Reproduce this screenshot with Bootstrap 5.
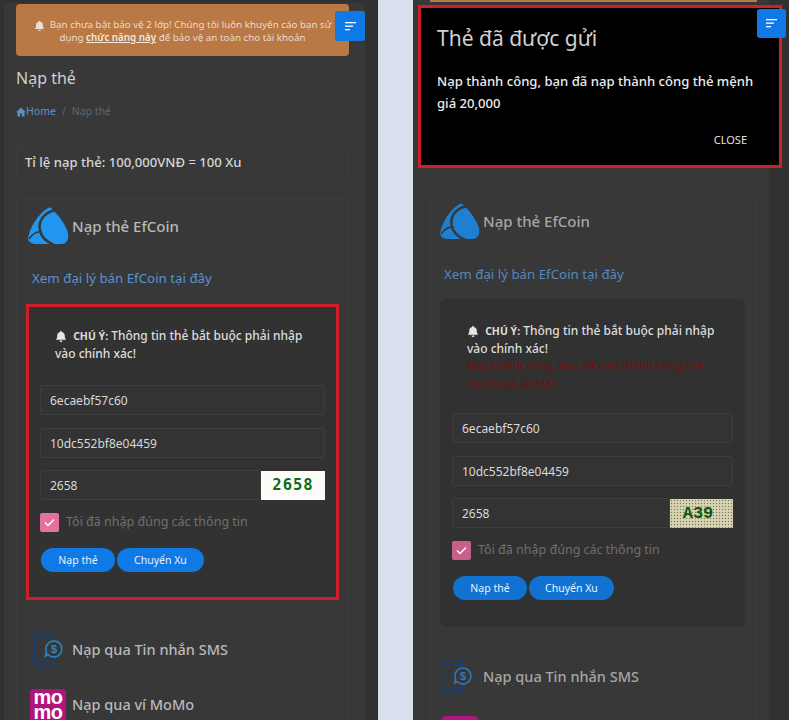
<!DOCTYPE html>
<html lang="vi">
<head>
  <meta charset="UTF-8" />
  <title>Nạp thẻ</title>
  <link href="https://cdn.jsdelivr.net/npm/bootstrap@5.3.3/dist/css/bootstrap.min.css" rel="stylesheet">
  <style>
    html, body { margin: 0; background: #d9dfec; }
    body { font-family: "Noto Sans", "Open Sans", sans-serif; }
    .shots { width: 789px; height: 720px; overflow: hidden; }
    .shot { position: relative; height: 720px; overflow: hidden; background: #313131; flex: none; }
    .shot-left { width: 378px; padding: 3px 0 0 4px; --btn: #0f7ae5; --tick: #e4719e; }
    .shot-right { width: 376px; margin-left: 35px; --btn: #1272d2; --tick: #c8608a; }
    .page-wrap { background: #383838; height: 100%; }
    .shot-left .page-wrap { width: 361px; padding: 1px 16px 0 12px; border-radius: 5px 5px 0 0; }
    .shot-right .page-wrap { width: 356px; padding: 0 12px 0 17px; }

    .warn-box { background: #b97844; color: #eadccf; height: 52px; border-radius: 4px; font-size: 9.8px; line-height: 13px; text-align: center; padding: 14px 8px 0; }
    .warn-box a { color: #f2e7dc; font-weight: 600; }
    .warn-sliver { background: #b97844; height: 2px; margin-bottom: 192px; }
    .page-title { font-size: 16px; line-height: 20px; color: #cfcfcf; margin: 12px 0 0; font-weight: 400; }
    .crumbs { --bs-breadcrumb-item-padding-x: 6px; font-size: 10.5px; line-height: 14px; margin: 16px 0 0; }
    .crumbs a { color: #5d92c9; text-decoration: none; }
    .crumbs .breadcrumb-item.active { color: #5d6873; }
    .crumbs .breadcrumb-item + .breadcrumb-item::before { color: #5d6873; }
    .rate-card { height: 35px; margin-top: 28px; background: transparent; border: 1px solid #3d3d3d; border-radius: 3px; color: #d6d6d6; font-size: 13.1px; line-height: 31px; padding-left: 8px; font-weight: 500; }

    .coin-card { background: transparent; border: 1px solid #3d3d3d; border-bottom: 0; border-radius: 3px 3px 0 0; margin-top: 18px; height: 700px; padding: 7px 9px 0; }
    .shot-left .coin-card { padding-left: 11px; }
    .pay-row { display: flex; align-items: center; height: 38px; color: #b9b9b9; font-size: 14.5px; font-weight: 500; }
    .pay-slot { flex: none; width: 44px; }
    .shot-right .pay-slot { width: 43px; }
    .shot-right .pay-row { color: #a6a6a6; }
    .coin-title { font-size: 15px; }
    .agent-link { display: block; color: #5b93cf; font-size: 13.3px; line-height: 16px; margin: 25px 0 18px 4px; text-decoration: none; }
    .shot-right .agent-link { margin: 26px 0 17px 4px; color: #5488be; }

    .form-frame { background: #323232; padding: 20px 11px 25px; border: 3px solid #cf1f29; width: 313px; margin-left: -2px; }
    .form-frame.is-plain { border: 0; border-radius: 6px; width: 305px; margin-left: 0; padding: 23px 12px 27px; background: #313131; }
    .note-text { font-size: 12px; line-height: 17px; color: #dedede; padding-left: 15px; margin-bottom: 23px; font-weight: 500; }
    .is-plain .note-text { margin-bottom: 22px; }
    .note-text .note-red { display: block; color: #6c1414; font-size: 11.2px; }
    .note-text svg { vertical-align: -2px; margin-right: 3px; }
    .note-text b { font-size: 10.5px; }
    .card-input { background: #333; border: 1px solid #3e3e3e; color: #d9d9d9; height: 30px; min-height: 0; font-size: 12px; padding: 0 9px; border-radius: 2px; margin-bottom: 13px; font-family: inherit; }
    .card-input + .card-input { margin-bottom: 12px; }
    .card-input:focus { background: #333; color: #d9d9d9; }
    .code-group { margin-bottom: 13px; }
    .code-group .card-input { margin-bottom: 0; }
    .captcha-box { flex: none; width: 64px; height: 29px; background: #fdfbf8; color: #0b6b12; font: 700 15.5px/29px "DejaVu Sans Mono", monospace; letter-spacing: 1px; text-align: center; }
    .captcha-box.is-noisy { background-color: #cfcaa8; background-image: radial-gradient(#7d7a60 .7px, transparent 1px), radial-gradient(#f2efe2 .8px, transparent 1px); background-size: 3px 3px; background-position: 0 0, 1.5px 1.5px; color: #0a5c12; font-family: "Liberation Mono", monospace; font-size: 17px; letter-spacing: 0; width: 63px; padding-right: 7px; }
    .tick-row { display: flex; align-items: center; height: 19px; margin-bottom: 16px; font-size: 12.5px; color: #6f6f6f; }
    .tick-box { width: 19px; height: 19px; border-radius: 2px; background: var(--tick); display: flex; align-items: center; justify-content: center; margin-right: 7px; }
    .pill-btn { background: var(--btn); border: 0; color: #e8f2fc; font-size: 10.5px; line-height: 24px; height: 24px; padding: 0; }
    .pill-btn:hover { background: var(--btn); color: #e8f2fc; }
    .btn-send { width: 74px; margin-left: 1px; }
    .btn-move { width: 87px; margin-left: 2px; }
    .is-plain .btn-move { width: 85px; }

    .menu-toggle { position: absolute; width: 30px; height: 30px; background: #0f7ae5; border-radius: 3px; display: flex; align-items: center; justify-content: center; padding: 0; border: 0; }
    .shot-left .menu-toggle { left: 335px; top: 11px; }
    .shot-right .menu-toggle { left: 344px; top: 9px; width: 29px; height: 29px; }

    .sent-modal { position: absolute; left: 5px; top: 5px; width: 364px; height: 163px; background: #000; border: 3px solid #cf1f29; border-radius: 0; color: #ececec; padding: 15px 16px 0 16px; }
    .sent-title { font-size: 21px; line-height: 30px; color: #d0d0d0; margin: 0 0 17px; font-weight: 400; }
    .sent-body { font-size: 13.1px; line-height: 22px; margin: 0; font-weight: 500; }
    .sent-close { display: block; margin: 18px 16px 0 auto; color: #e0e0e0; font-size: 11px; line-height: 16px; text-decoration: none; text-align: right; }

    .momo-logo { width: 36px; height: 36px; margin: 4px 0 0 2px; border-radius: 4px; background: #b0157e; color: #fff; font: 700 20px/15px "Liberation Sans", sans-serif; letter-spacing: -.5px; text-align: center; padding-top: 1px; }
    .sms-row { margin-top: 31px; }
    .momo-row { margin-top: 17px; }
  </style>
</head>
<body>
  <div class="shots d-flex">

    <!-- Left screenshot -->
    <section class="shot shot-left">
      <div class="page-wrap">
        <div class="warn-box">
          <svg width="11" height="11" viewBox="0 0 16 16" fill="#e8e0d8"><path d="M8 16a2 2 0 0 0 2-2H6a2 2 0 0 0 2 2zM8 1a1 1 0 0 0-1 1v.6A5 5 0 0 0 3 7.5c0 1.5-.5 4-2 5.5h14c-1.5-1.5-2-4-2-5.5a5 5 0 0 0-4-4.900V2a1 1 0 0 0-1-1z"/></svg>
          &nbsp;Bạn chưa bật bảo vệ 2 lớp! Chúng tôi luôn khuyến cáo bạn sử dụng <a href="#">chức năng này</a> để bảo vệ an toàn cho tài khoản
        </div>
        <h1 class="page-title">Nạp thẻ</h1>
        <ol class="breadcrumb crumbs">
          <li class="breadcrumb-item">
            <a href="#"><svg width="10" height="10" viewBox="0 0 16 16" fill="#5d92c9"><path d="M8 1 0 8.5h2.500V15h4v-4.500h3V15h4V8.500H16z"/></svg>Home</a>
          </li>
          <li class="breadcrumb-item active">Nạp thẻ</li>
        </ol>
        <div class="rate-card">Tỉ lệ nạp thẻ: 100,000VNĐ = 100 Xu</div>

        <div class="card coin-card">
          <div class="pay-row coin-title">
            <div class="pay-slot">
              <svg width="41" height="38" viewBox="0 0 41 38"><path d="M20 1C10 7 2 20 0 31c0 4 4 6 9 6h24c6 0 8-5 7-11-2-8-9-17-15-23-2-2-3-3-5-2z" fill="#2196ee"/><path d="M27 3C15 6 10 15 12 23c1 7 7 12 14 15" fill="none" stroke="#383838" stroke-width="2.6"/><path d="M1 32c4-6 8-8 13-7" fill="none" stroke="#383838" stroke-width="1.6"/></svg>
            </div>
            Nạp thẻ EfCoin
          </div>
          <a class="agent-link" href="#">Xem đại lý bán EfCoin tại đây</a>

          <form class="form-frame">
            <div class="note-text">
              <svg width="12" height="12" viewBox="0 0 16 16" fill="#e6e6e6"><path d="M8 16a2 2 0 0 0 2-2H6a2 2 0 0 0 2 2zM8 1a1 1 0 0 0-1 1v.6A5 5 0 0 0 3 7.5c0 1.5-.5 4-2 5.5h14c-1.5-1.5-2-4-2-5.5a5 5 0 0 0-4-4.900V2a1 1 0 0 0-1-1z"/></svg>
              <b>CHÚ Ý:</b> Thông tin thẻ bắt buộc phải nhập vào chính xác!
            </div>
            <input class="form-control card-input" type="text" value="6ecaebf57c60">
            <input class="form-control card-input" type="text" value="10dc552bf8e04459">
            <div class="d-flex align-items-center code-group">
              <input class="form-control card-input" type="text" value="2658">
              <div class="captcha-box">2658</div>
            </div>
            <div class="tick-row">
              <span class="tick-box"><svg width="11" height="9" viewBox="0 0 11 9"><path d="M1 4.5 4 7.5 10 1.5" fill="none" stroke="#fff" stroke-width="1.5"/></svg></span>
              Tôi đã nhập đúng các thông tin
            </div>
            <div class="d-flex">
              <button type="button" class="btn rounded-pill pill-btn btn-send">Nạp thẻ</button>
              <button type="button" class="btn rounded-pill pill-btn btn-move">Chuyển Xu</button>
            </div>
          </form>

          <div class="pay-row sms-row">
            <div class="pay-slot">
              <svg width="36" height="36" viewBox="0 0 36 36"><rect x="6.5" y="1" width="19" height="33" rx="3" fill="none" stroke="#16407e" stroke-width="1.5"/><path d="M7 6h18M7 29h18" stroke="#16407e"/><path d="M26 9a8 8 0 1 1-6 13.5l-2.500 1.500 1-4A8 8 0 0 1 26 9z" fill="#383838" stroke="#2a86c8" stroke-width="1.6"/><text x="26" y="21" font-size="11" font-weight="700" fill="#2a86c8" text-anchor="middle" font-family="Liberation Sans">$</text></svg>
            </div>
            Nạp qua Tin nhắn SMS
          </div>
          <div class="pay-row momo-row">
            <div class="pay-slot"><div class="momo-logo">mo<br>mo</div></div>
            Nạp qua ví MoMo
          </div>
        </div>
      </div>
      <button class="menu-toggle" type="button" aria-label="Menu">
        <svg width="11" height="9" viewBox="0 0 11 9" fill="#fff"><rect width="11" height="1.3"/><rect y="3.5" width="8" height="1.3"/><rect y="7" width="5" height="1.3"/></svg>
      </button>
    </section>

    <!-- Right screenshot, modal open -->
    <section class="shot shot-right">
      <div class="page-wrap">
        <div class="warn-sliver"></div>
        <div class="card coin-card mt-0">
          <div class="pay-row coin-title">
            <div class="pay-slot">
              <svg width="40" height="37" viewBox="0 0 41 38"><path d="M20 1C10 7 2 20 0 31c0 4 4 6 9 6h24c6 0 8-5 7-11-2-8-9-17-15-23-2-2-3-3-5-2z" fill="#1f7fd0"/><path d="M27 3C15 6 10 15 12 23c1 7 7 12 14 15" fill="none" stroke="#383838" stroke-width="2.6"/><path d="M1 32c4-6 8-8 13-7" fill="none" stroke="#383838" stroke-width="1.6"/></svg>
            </div>
            Nạp thẻ EfCoin
          </div>
          <a class="agent-link" href="#">Xem đại lý bán EfCoin tại đây</a>

          <form class="form-frame is-plain">
            <div class="note-text">
              <svg width="12" height="12" viewBox="0 0 16 16" fill="#e6e6e6"><path d="M8 16a2 2 0 0 0 2-2H6a2 2 0 0 0 2 2zM8 1a1 1 0 0 0-1 1v.6A5 5 0 0 0 3 7.5c0 1.5-.5 4-2 5.5h14c-1.5-1.5-2-4-2-5.5a5 5 0 0 0-4-4.900V2a1 1 0 0 0-1-1z"/></svg>
              <b>CHÚ Ý:</b> Thông tin thẻ bắt buộc phải nhập vào chính xác!
              <span class="note-red">Nạp thành công, bạn đã nạp thành công thẻ mệnh giá 20,000</span>
            </div>
            <input class="form-control card-input" type="text" value="6ecaebf57c60">
            <input class="form-control card-input" type="text" value="10dc552bf8e04459">
            <div class="d-flex align-items-center code-group">
              <input class="form-control card-input" type="text" value="2658">
              <div class="captcha-box is-noisy">A39</div>
            </div>
            <div class="tick-row">
              <span class="tick-box"><svg width="11" height="9" viewBox="0 0 11 9"><path d="M1 4.5 4 7.5 10 1.5" fill="none" stroke="#fff" stroke-width="1.5"/></svg></span>
              Tôi đã nhập đúng các thông tin
            </div>
            <div class="d-flex">
              <button type="button" class="btn rounded-pill pill-btn btn-send">Nạp thẻ</button>
              <button type="button" class="btn rounded-pill pill-btn btn-move">Chuyển Xu</button>
            </div>
          </form>

          <div class="pay-row sms-row">
            <div class="pay-slot">
              <svg width="36" height="36" viewBox="0 0 36 36"><rect x="3.5" y="1" width="19" height="33" rx="3" fill="none" stroke="#16407e" stroke-width="1.5"/><path d="M4 6h18M4 29h18" stroke="#16407e"/><path d="M23 9a8 8 0 1 1-6 13.5l-2.500 1.500 1-4A8 8 0 0 1 23 9z" fill="#383838" stroke="#2a7ab8" stroke-width="1.6"/><text x="23" y="21" font-size="11" font-weight="700" fill="#2a7ab8" text-anchor="middle" font-family="Liberation Sans">$</text></svg>
            </div>
            Nạp qua Tin nhắn SMS
          </div>
          <div class="pay-row momo-row">
            <div class="pay-slot"><div class="momo-logo">mo<br>mo</div></div>
            Nạp qua ví MoMo
          </div>
        </div>
      </div>

      <div class="modal-content sent-modal">
        <h2 class="sent-title">Thẻ đã được gửi</h2>
        <p class="sent-body">Nạp thành công, bạn đã nạp thành công thẻ mệnh giá 20,000</p>
        <a class="sent-close" href="#">CLOSE</a>
      </div>
      <button class="menu-toggle" type="button" aria-label="Menu">
        <svg width="11" height="9" viewBox="0 0 11 9" fill="#fff"><rect width="11" height="1.3"/><rect y="3.5" width="8" height="1.3"/><rect y="7" width="5" height="1.3"/></svg>
      </button>
    </section>
  </div>
  <script src="https://cdn.jsdelivr.net/npm/bootstrap@5.3.3/dist/js/bootstrap.bundle.min.js"></script>
</body>
</html>
